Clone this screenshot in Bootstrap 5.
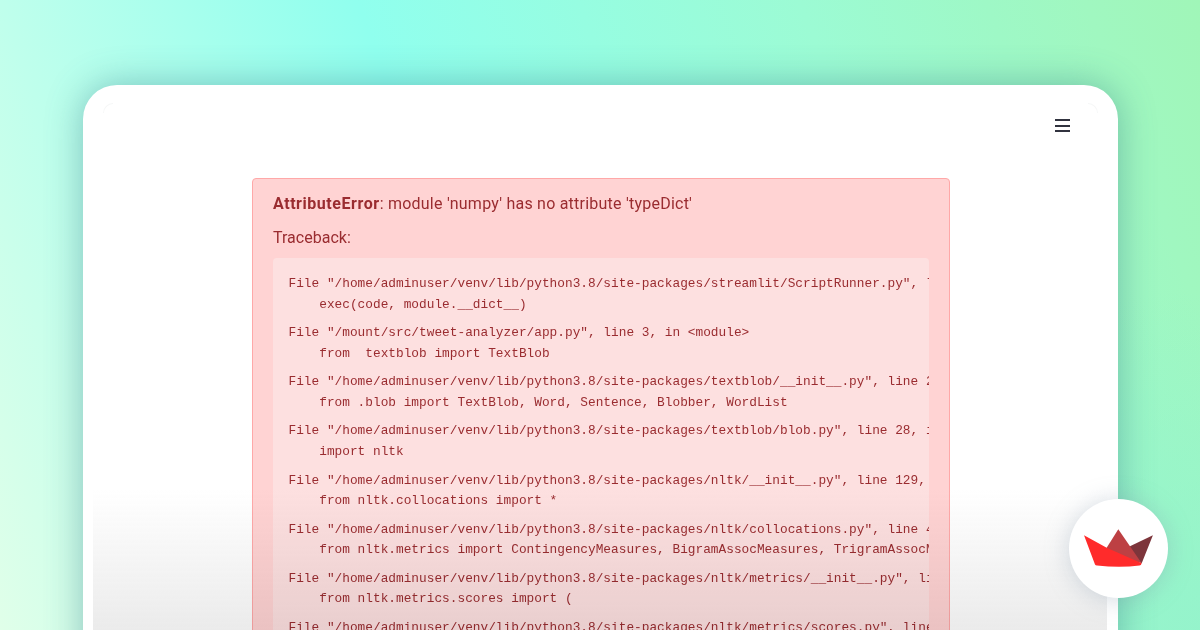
<!DOCTYPE html>
<html lang="en">
<head>
<meta charset="utf-8">
<title>Tweet analyzer error</title>
<link href="https://cdn.jsdelivr.net/npm/bootstrap@5.3.0/dist/css/bootstrap.min.css" rel="stylesheet">
<style>
html,body{height:630px;overflow:hidden}
.stage{height:630px;overflow:hidden;padding:85px 82px 0 83px;position:relative;
  background:radial-gradient(circle 340px at 1200px 630px,rgba(148,243,204,.9) 0%,rgba(148,243,204,0) 100%),
  linear-gradient(70deg,#e0ffe9 0%,#bfffec 16%,#90ffee 41%,#9cfbd4 72%,#9ef8c6 85%,#a0f7c0 92%,#a0f6b8 100%);}
.appwin{height:700px;background:#fff;border-radius:34px;position:relative;
  box-shadow:0 0 36px rgba(40,110,125,.42);padding:93px 0 0 169px}
.cornerline{position:absolute;width:10px;height:10px;top:18px;border-top:1px solid #f6f7f7}
.cornerline.lft{left:20px;border-left:1px solid #f6f7f7;border-top-left-radius:10px}
.cornerline.rgt{right:20px;border-right:1px solid #f6f7f7;border-top-right-radius:10px}
.menuicon{width:15px;position:absolute;top:34px;right:48px}
.menuicon span{height:2px;background:#31333f;margin-bottom:3.5px}
.alertbox{width:698px;background:#ffd3d3;border:1px solid #ffa8a8;border-radius:4px;
  padding:12px 20px 0;color:#9a2c30;font-size:16px;height:600px;overflow:hidden}
.errline{font-family:Roboto,sans-serif;line-height:24px;margin:1px 0 10px;letter-spacing:.23px}
.errline strong{letter-spacing:.55px}
.tbhead{font-family:Roboto,sans-serif;line-height:24px;margin:0 0 8px;letter-spacing:.02px}
.tracebox{background:#fde0e0;border-radius:4px;padding:16px 0 0 15.5px;overflow:hidden;height:500px;
  font-family:"Liberation Mono",monospace;font-size:12.8px;line-height:20.5px;white-space:pre;color:#9a2c30}
.frameline{margin-bottom:8.14px}
.fadeout{position:absolute;left:10px;right:11px;top:405px;height:140px;
  background:linear-gradient(180deg,rgba(235,235,235,0) 0%,rgba(235,235,235,1) 100%);mix-blend-mode:multiply}
.logodisc{position:absolute;left:1069px;top:499px;width:99px;height:99px;background:#fff;border-radius:50%;
  box-shadow:0 2px 24px rgba(130,150,170,.35)}
</style>
</head>
<body>
<div class="stage">
  <div class="appwin">
    <div class="cornerline lft"></div>
    <div class="cornerline rgt"></div>
    <div class="menuicon"><span class="d-block"></span><span class="d-block"></span><span class="d-block"></span></div>
    <div class="alertbox">
      <p class="errline"><strong>AttributeError</strong>: module 'numpy' has no attribute 'typeDict'</p>
      <p class="tbhead">Traceback:</p>
      <div class="tracebox"><div class="frameline">File "/home/adminuser/venv/lib/python3.8/site-packages/streamlit/ScriptRunner.py", line 332, in _run_script
    exec(code, module.__dict__)</div><div class="frameline">File "/mount/src/tweet-analyzer/app.py", line 3, in &lt;module&gt;
    from  textblob import TextBlob</div><div class="frameline">File "/home/adminuser/venv/lib/python3.8/site-packages/textblob/__init__.py", line 2, in &lt;module&gt;
    from .blob import TextBlob, Word, Sentence, Blobber, WordList</div><div class="frameline">File "/home/adminuser/venv/lib/python3.8/site-packages/textblob/blob.py", line 28, in &lt;module&gt;
    import nltk</div><div class="frameline">File "/home/adminuser/venv/lib/python3.8/site-packages/nltk/__init__.py", line 129, in &lt;module&gt;
    from nltk.collocations import *</div><div class="frameline">File "/home/adminuser/venv/lib/python3.8/site-packages/nltk/collocations.py", line 40, in &lt;module&gt;
    from nltk.metrics import ContingencyMeasures, BigramAssocMeasures, TrigramAssocMeasures</div><div class="frameline">File "/home/adminuser/venv/lib/python3.8/site-packages/nltk/metrics/__init__.py", line 16, in &lt;module&gt;
    from nltk.metrics.scores import (</div><div class="frameline">File "/home/adminuser/venv/lib/python3.8/site-packages/nltk/metrics/scores.py", line 18, in &lt;module&gt;
    from scipy.stats.stats import betai</div></div>
    </div>
    <div class="fadeout"></div>
  </div>
  <div class="logodisc">
    <svg width="99" height="99" viewBox="1069 499 99 99" aria-hidden="true">
      <path d="M1152.9 535.3L1131 545.7L1125 549L1141.7 563.3Z" fill="#7d353b"/>
      <path d="M1118.3 529.3L1104 552L1141.7 563.3Z" fill="#bd4043"/>
      <path d="M1084 535.3L1095 564.5Q1095.5 565.6 1097 565.6Q1120 568 1139.5 565.6Q1141 565.5 1141.7 563.3L1106.7 547.7Z" fill="#ff2b2b"/>
    </svg>
  </div>
</div>
</body>
</html>
